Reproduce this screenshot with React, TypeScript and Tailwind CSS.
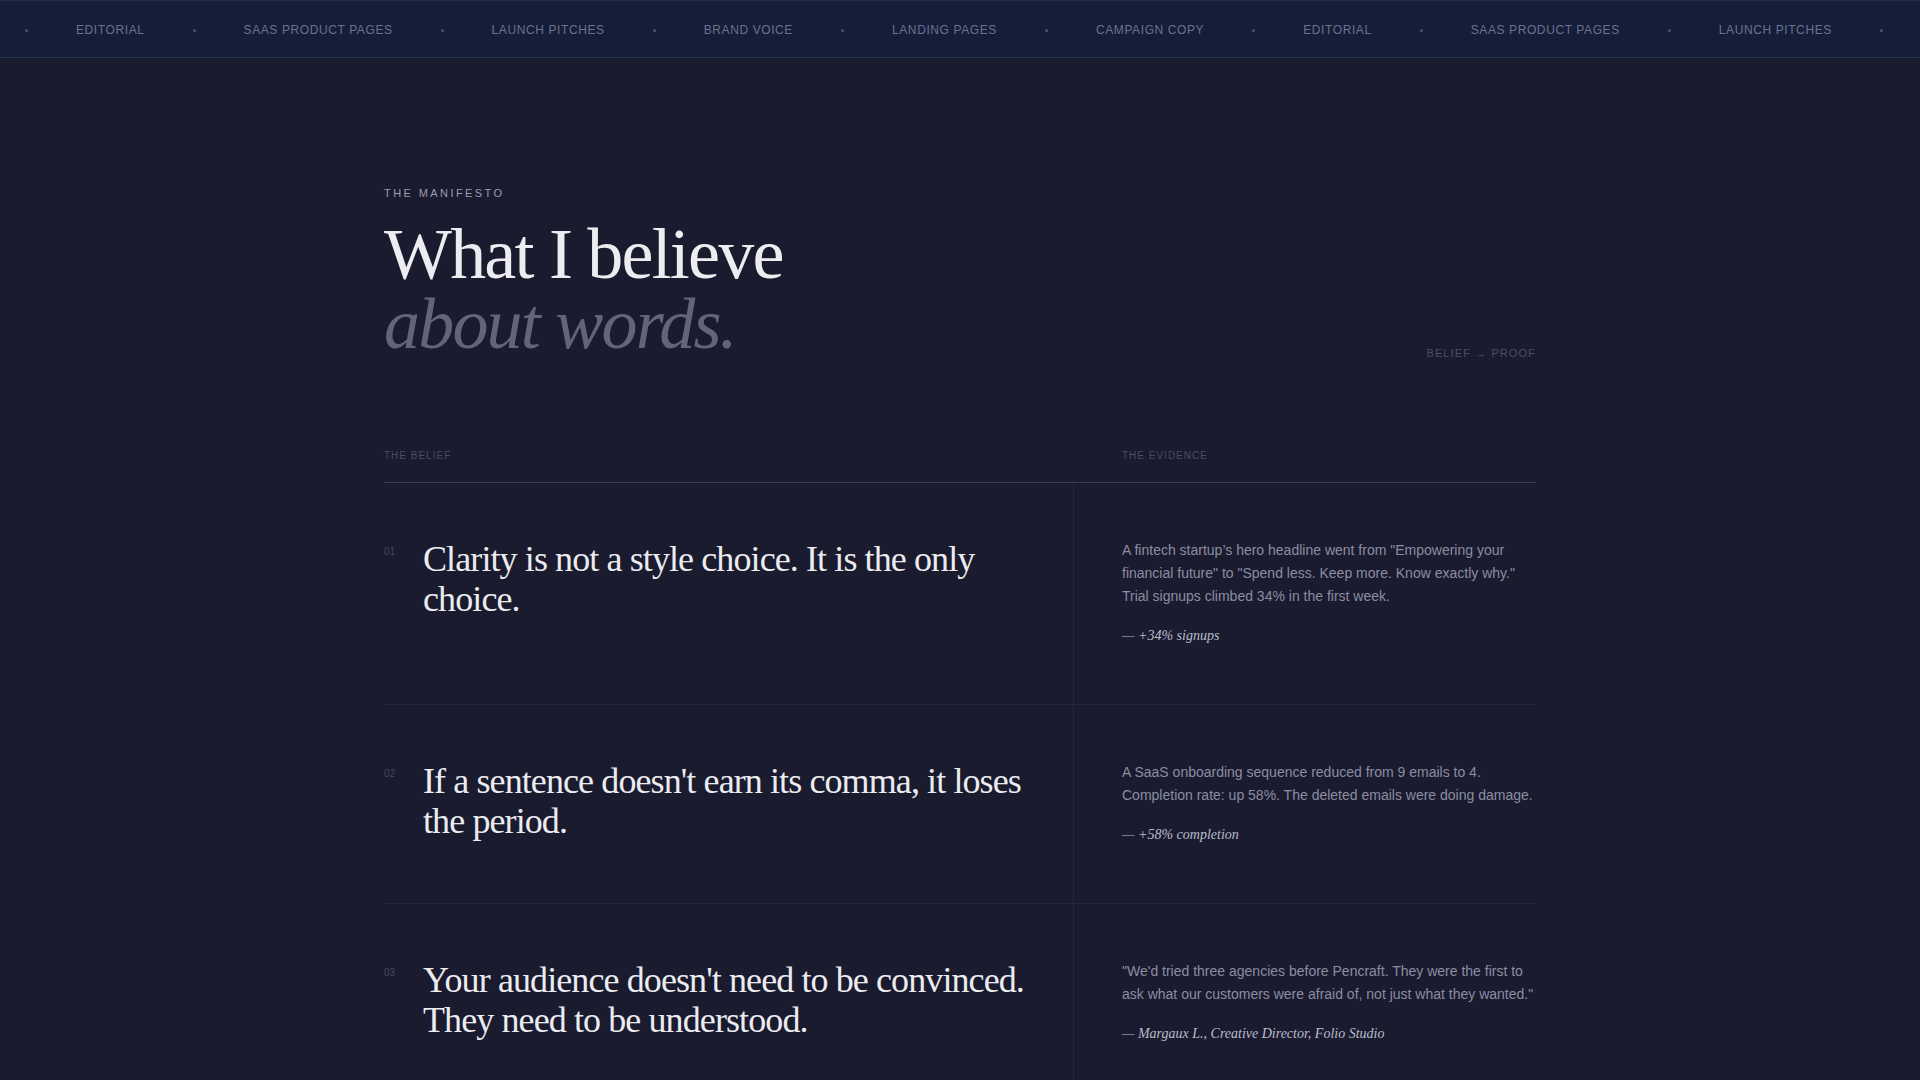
const tags = [
  'Editorial',
  'SaaS Product Pages',
  'Launch Pitches',
  'Brand Voice',
  'Landing Pages',
  'Campaign Copy',
];

const beliefs = [
  {
    n: '01',
    text: 'Clarity is not a style choice. It is the only choice.',
    evidence:
      'A fintech startup\u2019s hero headline went from "Empowering your financial future" to "Spend less. Keep more. Know exactly why." Trial signups climbed 34% in the first week.',
    proof: '+34% signups',
  },
  {
    n: '02',
    text: "If a sentence doesn't earn its comma, it loses the period.",
    evidence:
      'A SaaS onboarding sequence reduced from 9 emails to 4. Completion rate: up 58%. The deleted emails were doing damage.',
    proof: '+58% completion',
  },
  {
    n: '03',
    text: "Your audience doesn't need to be convinced. They need to be understood.",
    evidence:
      '"We\'d tried three agencies before Pencraft. They were the first to ask what our customers were afraid of, not just what they wanted."',
    proof: 'Margaux L., Creative Director, Folio Studio',
  },
];

function Marquee() {
  const items = [...tags, ...tags];
  return (
    <div className="h-[58px] bg-[#151e38] border-t border-b border-t-[#222b47] border-b-[#2a3352] overflow-hidden">
      <div className="flex items-center h-full gap-12 pl-[25px] pt-[2px] whitespace-nowrap font-['Liberation_Sans',Arial,sans-serif] text-[12px] tracking-[0.05em] uppercase text-[#6b7190]">
        {items.map((t, i) => (
          <div key={i} className="flex items-center gap-12 shrink-0">
            <span className="w-[3px] h-[3px] rounded-full bg-[#4a5272] shrink-0" />
            <span>{t}</span>
          </div>
        ))}
      </div>
    </div>
  );
}

export default function App() {
  return (
    <div className="min-h-screen bg-[#1a1b2e] font-['Liberation_Sans',Arial,sans-serif]">
      <Marquee />

      <main className="max-w-[1152px] mx-auto pt-[127px] pb-24">
        {/* Heading */}
        <div className="flex justify-between items-end">
          <div>
            <p className="text-[11px] tracking-[0.22em] uppercase text-[#9a9cb3] mb-[17px]">
              The Manifesto
            </p>
            <h1 className="font-['Liberation_Serif','Times_New_Roman',serif] text-[72px] leading-[0.98] tracking-tight text-[#ececf1]">
              What I believe
              <br />
              <em className="text-[#62647c]">about words.</em>
            </h1>
          </div>
          <p className="text-[11px] tracking-[0.1em] uppercase text-[#4b4e68] -mb-[2px]">
            Belief → Proof
          </p>
        </div>

        {/* Table */}
        <div className="mt-[88px]">
          <div className="grid grid-cols-[690px_1fr] border-b border-[#3a3c53] pb-[19px]">
            <span className="text-[10px] leading-[15px] tracking-[0.1em] uppercase text-[#4a4c64]">
              The Belief
            </span>
            <span className="pl-12 text-[10px] leading-[15px] tracking-[0.1em] uppercase text-[#4a4c64]">
              The Evidence
            </span>
          </div>

          {beliefs.map((b) => (
            <div key={b.n} className="grid grid-cols-[690px_1fr] border-b border-[#25273b]">
              <div className="flex py-14 pr-12 border-r border-[#25273b]">
                <span className="w-[39px] shrink-0 mt-[5px] text-[10px] leading-[15px] text-[#45475e]">
                  {b.n}
                </span>
                <p className="font-['Liberation_Serif','Times_New_Roman',serif] text-[36px] leading-[40px] tracking-tight text-[#ebebf0]">
                  {b.text}
                </p>
              </div>
              <div className="pt-14 pb-[58px] pl-12">
                <p className="text-[14px] leading-[1.65] text-[#8b8da3]">{b.evidence}</p>
                <p className="mt-[18px] font-['Liberation_Serif','Times_New_Roman',serif] italic text-[14px] leading-5 text-[#b9bbcc]">
                  — {b.proof}
                </p>
              </div>
            </div>
          ))}
        </div>
      </main>
    </div>
  );
}
